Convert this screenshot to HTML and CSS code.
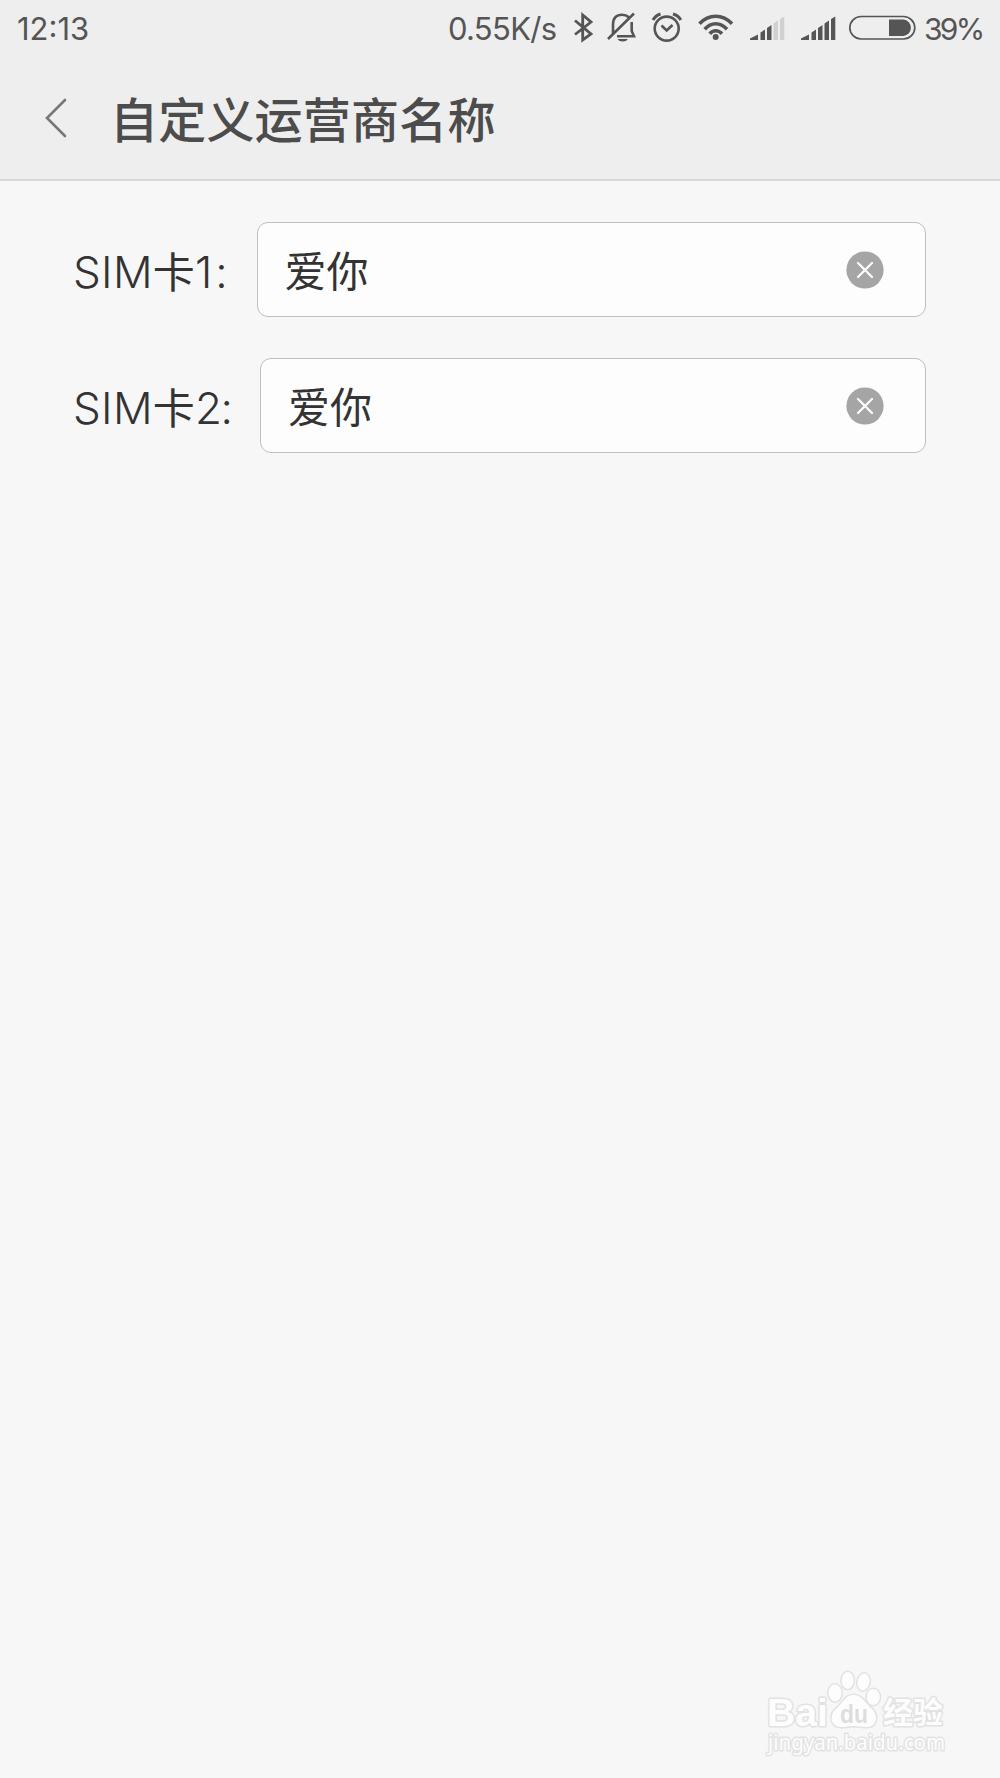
FILE: index.html
```html
<!DOCTYPE html>
<html lang="zh-CN">
<head>
<meta charset="utf-8">
<title>自定义运营商名称</title>
<link rel="stylesheet" href="styles.css">
</head>
<body>
<div class="screen">
  <header class="header">
    <div class="status">
      <span class="clock">12:13</span>
      <span class="speed">0.55K/s</span>
      <svg class="icons" viewBox="570 0 350 56" width="350" height="56" fill="none" stroke="#555" stroke-width="2.6">
        <path d="M575 20.5L591 34L582.7 40V15L591 22L575 34.5" stroke-width="2.8"/>
        <path d="M613 34V24.500C613 18 616.500 14.700 622 14.700C625 14.700 627 15.500 628.500 17M631.700 22V31L634 36.300H617M608 39L634 13.500"/>
        <path d="M617.500 39H628Q626.500 41.500 622.700 41.500T617.500 39Z" fill="#555" stroke="none"/>
        <circle cx="666.700" cy="28.600" r="12"/>
        <path d="M661.500 25.500L666.700 30.500L672.500 25"/>
        <path d="M653 20Q655.500 15.500 660.500 14M673 14Q678.500 15.500 680.800 20" stroke-width="3"/>
        <g stroke-width="3.600"><path d="M699.500 24Q706.500 16.500 715.700 16.500T732 24M704.700 29.500Q709.500 24 715.700 24T727 29.500M709.700 34Q712.300 31 715.700 31T722 34" transform="translate(0 -.3)"/></g>
        <circle cx="715.700" cy="37" r="3" fill="#555" stroke="none"/>
        <g fill="#555" stroke="none">
          <path d="M750 40V38.500L758 34.500V40ZM760.500 40V32.500L765 29.500V40ZM767 40V28L771.500 25V40Z"/>
          <path d="M773.500 40V23.500L778 20.500V40ZM780 40V19L784.300 16.500V40Z" fill="#d0d0d0"/>
          <path d="M801 40V38.500L809 34.500V40ZM811.500 40V32.500L816 29.500V40ZM818 40V28L822.500 25V40ZM824.500 40V23.500L829 20.500V40ZM831 40V19L835.300 16.500V40Z"/>
        </g>
        <rect x="849.800" y="16.500" width="65" height="22.500" rx="11.250" stroke-width="1.700"/>
        <path d="M889 19.500H903.500A8.300 8.300 0 0 1 903.500 36H889Z" fill="#555" stroke="none"/>
      </svg>
      <span class="percent">39%</span>
    </div>
    <div class="titlebar">
      <svg class="back" viewBox="0 0 24 40" width="24" height="40"><path d="M21 2L3 20L21 38" fill="none" stroke="#777" stroke-width="2.600" stroke-linecap="round"/></svg>
      <h1 class="title">自定义运营商名称</h1>
    </div>
  </header>
  <main class="form">
    <div class="row">
      <div class="label label-one"><span class="sim">SIM</span>卡<span class="num">1:</span></div>
      <div class="field"><span class="value">爱你</span>
        <svg class="clear" viewBox="0 0 38 38" width="38" height="38"><circle cx="19" cy="19" r="18.600" fill="#a5a5a5"/><path d="M12 12L26 26M26 12L12 26" stroke="#fff" stroke-width="2.200" stroke-linecap="round"/></svg>
      </div>
    </div>
    <div class="row">
      <div class="label label-two"><span class="sim">SIM</span>卡<span class="num">2:</span></div>
      <div class="field"><span class="value">爱你</span>
        <svg class="clear" viewBox="0 0 38 38" width="38" height="38"><circle cx="19" cy="19" r="18.600" fill="#a5a5a5"/><path d="M12 12L26 26M26 12L12 26" stroke="#fff" stroke-width="2.200" stroke-linecap="round"/></svg>
      </div>
    </div>
  </main>
  <footer class="brand">
    <svg viewBox="750 1650 220 120" width="220" height="120" class="logo">
      <g fill="#fdfdfd" stroke="#e2e2e2" stroke-width="3" paint-order="stroke" stroke-linejoin="round">
        <text x="767" y="1726" class="bai" textLength="61" lengthAdjust="spacingAndGlyphs">Bai</text>
        <ellipse cx="835" cy="1693" rx="6.500" ry="8.500"/>
        <ellipse cx="847.700" cy="1680.500" rx="6" ry="8.500"/>
        <ellipse cx="863.500" cy="1682" rx="6" ry="8.500" transform="rotate(12 863.500 1682)"/>
        <ellipse cx="873.300" cy="1697" rx="6.500" ry="8"/>
        <path d="M853.500 1695C845 1695 843 1703 837 1708C828 1715 831 1727 841 1727C847 1727 849 1726 854 1726C859 1726 862 1727 867 1727C877 1727 879 1715 871 1708C865 1703 862 1695 853.500 1695Z"/>
        <text x="883" y="1723" class="exp" textLength="60">经验</text>
        <text x="768" y="1750" class="url" textLength="177" lengthAdjust="spacingAndGlyphs">jingyan.baidu.com</text>
      </g>
      <text x="840" y="1723" class="du" textLength="28" lengthAdjust="spacingAndGlyphs">du</text>
    </svg>
  </footer>
</div>
</body>
</html>
```
FILE: styles.css
```css
* { box-sizing: border-box; }
body { margin: 0; background: #f7f7f7; font-family: Inter, "Noto Sans CJK SC", sans-serif; }
.screen { width: 1000px; height: 1778px; display: flex; flex-direction: column; background: #f7f7f7; overflow: hidden; }
.header { height: 181px; background: #eee; border-bottom: 2px solid #d8d8d8; }
.status { height: 56px; display: flex; align-items: center; color: #555; font-size: 31px; line-height: 56px; white-space: nowrap; }
.clock, .speed, .percent { padding-top: 1px; }
.clock { width: 432px; padding-left: 17px; }
.speed { width: 138px; padding-left: 16px; letter-spacing: -.7px; }
.icons { display: block; flex: none; }
.percent { padding-left: 4px; font-size: 30px; letter-spacing: -2.700px; }
.titlebar { display: flex; align-items: center; height: 124px; padding-left: 44px; }
.back { margin-top: -1px; }
.title { margin: -2px 0 0 42px; font: 500 48px/72px "Noto Sans CJK SC", sans-serif; letter-spacing: .2px; color: #4c4c4c; }
.form { display: flex; flex-direction: column; gap: 41px; padding: 41px 74px 0; }
.row { display: flex; height: 95px; }
.label { flex: none; display: flex; align-items: center; font: 400 42px/91px "Noto Sans CJK SC", sans-serif; color: #333; white-space: nowrap; }
.label-one { width: 182.500px; }
.label-two { width: 186px; }
.sim, .num { font-family: Inter, sans-serif; font-size: 44px; font-weight: 350; padding-top: 5px; }
.sim { margin-left: -1px; letter-spacing: .3px; }
.label-one .num { letter-spacing: 3px; }
.label-two .num { letter-spacing: -1.500px; }
.field { flex: 1; display: flex; align-items: center; justify-content: space-between; border: 1.500px solid #bfbfbf; border-radius: 11px; background: #fdfdfd; padding: 0 41px 0 27px; }
.value { margin-top: -1px; font: 400 42px/60px "Noto Sans CJK SC", sans-serif; color: #333; }
.brand { margin-top: auto; padding: 0 30px 8px 0; display: flex; justify-content: flex-end; }
.logo { display: block; }
.bai { font: 700 39px "Liberation Sans", sans-serif; }
.exp { font: 700 30px "Noto Sans CJK SC", sans-serif; }
.url { font: 400 22px "Noto Sans", sans-serif; }
.du { font: 700 26px "Liberation Sans", sans-serif; fill: #ddd; }
```
